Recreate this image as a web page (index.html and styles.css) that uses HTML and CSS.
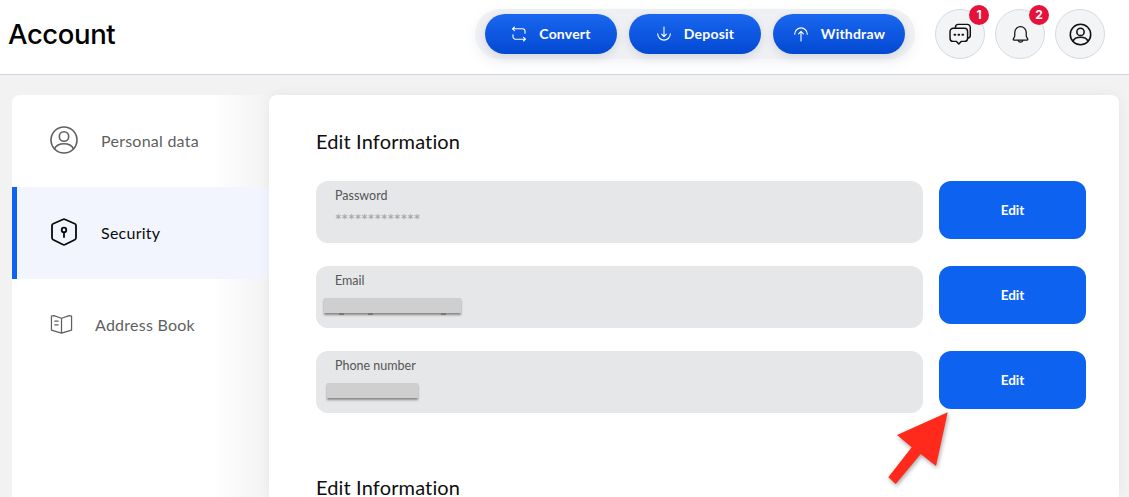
FILE: index.html
```html
<!DOCTYPE html>
<html lang="en">
<head>
<meta charset="utf-8">
<title>Account</title>
<link rel="stylesheet" href="styles.css">
</head>
<body>
<header class="topbar">
  <h1 class="page-title">Account</h1>
  <div class="actions">
    <a class="action">
      <svg class="action-icon" viewBox="0 0 16 16"><path d="M3.500 1 1.500 2.800l2 1.800M1.800 2.800h9.700A2.500 2.500 0 0 1 14 5.300v1.900M12.500 15l2-1.800-2-1.800M14.200 13.200H4.500A2.500 2.500 0 0 1 2 10.700V8.800"/></svg>
      <span>Convert</span>
    </a>
    <a class="action">
      <svg class="action-icon" viewBox="0 0 16 16"><path d="M8 1v9.500M5.600 8.200 8 10.600l2.400-2.400M1.700 7.800a6.300 6.300 0 0 0 12.600 0"/></svg>
      <span>Deposit</span>
    </a>
    <a class="action">
      <svg class="action-icon" viewBox="0 0 16 16"><path d="M8 15V5.500M5.600 7.800 8 5.400l2.400 2.400M1.700 8.200a6.300 6.300 0 0 1 12.600 0"/></svg>
      <span>Withdraw</span>
    </a>
  </div>
  <div class="round-buttons">
    <button class="round">
      <svg class="round-icon chat-icon" viewBox="0 0 24 24"><path d="M7.500 6.200V5.500A2.500 2.500 0 0 1 10 3h8a2.700 2.700 0 0 1 2.700 2.700v7a2.600 2.600 0 0 1-2.200 2.600"/><path d="M5.500 6.500h10a2.800 2.800 0 0 1 2.800 2.800v6a2.800 2.800 0 0 1-2.800 2.800h-2.700L10.500 20.500 8.200 18.100H5.500a2.800 2.800 0 0 1-2.800-2.800v-6A2.800 2.800 0 0 1 5.500 6.500Z"/><path class="dots" d="M6.700 12.300h.6M10.200 12.300h.6M13.700 12.300h.6"/></svg>
      <span class="badge">1</span>
    </button>
    <button class="round">
      <svg class="round-icon bell-icon" viewBox="0 0 24 24"><path d="M12 4.500a5.500 5.500 0 0 0-5.500 5.500v3.200c0 1.400-1.500 2.300-1.500 3.300 0 .7.500 1 1.200 1h11.600c.7 0 1.200-.3 1.200-1 0-1-1.500-1.900-1.500-3.300V10A5.500 5.500 0 0 0 12 4.500Z"/><path d="M9.800 17.800a2.300 2.300 0 0 0 4.400 0"/></svg>
      <span class="badge">2</span>
    </button>
    <button class="round">
      <svg class="round-icon profile-icon" viewBox="0 0 24 24"><circle cx="12" cy="12" r="9.800"/><circle cx="12" cy="9.500" r="3.500"/><path d="M4.800 18.400c1-2.400 3.600-3.700 7.200-3.700s6.200 1.300 7.200 3.700"/></svg>
    </button>
  </div>
</header>

<main class="content">
  <nav class="sidebar">
    <a class="nav-item">
      <svg class="nav-icon" viewBox="0 0 28 28"><circle cx="14" cy="14" r="13"/><circle cx="14" cy="10.500" r="4.700"/><path d="M4.500 22.800c1.600-3.300 5-5 9.500-5s7.900 1.700 9.500 5"/></svg>
      <span>Personal data</span>
    </a>
    <a class="nav-item nav-item-active">
      <svg class="nav-icon" viewBox="0 0 28 28"><path d="M12.800 1.500a2.500 2.500 0 0 1 2.400 0l9.600 4.200a2 2 0 0 1 1.200 1.800v12.300a2.200 2.200 0 0 1-1.200 1.900l-9.600 4.800a2.500 2.500 0 0 1-2.400 0l-9.600-4.800A2.200 2.200 0 0 1 2 19.800V7.500a2 2 0 0 1 1.200-1.800Z"/><circle class="key-dot" cx="14" cy="12" r="2.300"/><path d="M14 14.500v4.500"/></svg>
      <span>Security</span>
    </a>
    <a class="nav-item nav-item-book">
      <svg class="nav-icon book-icon" viewBox="0 0 24 22"><path d="M12 5 4 2.200 1.500 2.800v14.500L12 20.500l10.500-3.200V2.800L20 2.200 12 5Zm0 0v15.500"/><path d="M5 8h3.500M5 12h3.500"/></svg>
      <span>Address Book</span>
    </a>
  </nav>

  <section class="panel">
    <h2 class="section-title">Edit Information</h2>
    <div class="rows">
      <div class="row">
        <div class="field">
          <span class="field-label">Password</span>
          <span class="field-value">*************</span>
        </div>
        <button class="edit">Edit</button>
      </div>
      <div class="row">
        <div class="field">
          <span class="field-label">Email</span>
          <span class="redaction redaction-email"></span>
        </div>
        <button class="edit">Edit</button>
      </div>
      <div class="row">
        <div class="field">
          <span class="field-label">Phone number</span>
          <span class="redaction redaction-phone"></span>
        </div>
        <button class="edit">Edit</button>
      </div>
    </div>
    <h2 class="section-title section-title-second">Edit Information</h2>
  </section>
</main>

<svg class="arrow" viewBox="0 0 1129 497" aria-hidden="true">
  <polygon points="947.700,412.300 897,435 911.700,447.300 888.300,477.300 895.700,484 920.700,454 936,466"/>
</svg>
</body>
</html>
```

FILE: styles.css
```css
* { box-sizing: border-box; }

html, body {
  margin: 0;
  height: 497px;
  overflow: hidden;
}

body {
  position: relative;
  display: flex;
  flex-direction: column;
  background: #f1f1f1;
  font-family: "Lato", "Inter", sans-serif;
  color: #000;
}

.topbar {
  flex: none;
  display: flex;
  align-items: flex-start;
  height: 75px;
  padding: 9px 24px 0 8px;
  background: #fff;
  border-bottom: 1px solid #ccd6e2;
}

.page-title {
  flex: 1;
  margin: 0;
  font-family: "Inter", sans-serif;
  font-size: 27.5px;
  line-height: 50px;
  font-weight: 500;
  letter-spacing: -0.4px;
}

.actions {
  display: flex;
  gap: 12px;
  height: 50px;
  padding: 5px 10px;
  margin-right: 20px;
  background: #eff0f3;
  border-radius: 25px;
  box-shadow: 0 4px 12px rgba(90, 100, 130, 0.08);
}

.action {
  display: flex;
  align-items: center;
  justify-content: center;
  gap: 12px;
  width: 132px;
  height: 40px;
  padding-bottom: 1px;
  color: #fff;
  font-size: 14px;
  font-weight: 700;
  letter-spacing: 0.2px;
  background: linear-gradient(180deg, #1a67f0 0%, #0349d2 100%);
  border-radius: 20px;
  box-shadow: 0 3px 8px rgba(60, 80, 130, 0.16);
}

.action-icon {
  width: 16px;
  height: 16px;
  fill: none;
  stroke: #fff;
  stroke-width: 1.1;
  stroke-linecap: round;
  stroke-linejoin: round;
}

.round-buttons {
  display: flex;
  gap: 10px;
}

.round {
  position: relative;
  display: flex;
  align-items: center;
  justify-content: center;
  width: 50px;
  height: 50px;
  padding: 0;
  background: #f3f4f6;
  border: 1px solid #d5dae3;
  border-radius: 50%;
}

.round-icon {
  width: 24px;
  height: 24px;
  fill: none;
  stroke: #111;
  stroke-width: 1.4;
  stroke-linecap: round;
  stroke-linejoin: round;
}

.round-icon .dots {
  stroke-width: 1.8;
}

.chat-icon {
  width: 27px;
  height: 27px;
  stroke-width: 1.3;
}

.bell-icon {
  width: 25px;
  height: 25px;
  stroke-width: 1.2;
}

.profile-icon {
  width: 25px;
  height: 25px;
  stroke-width: 1.5;
}

.badge {
  position: absolute;
  top: -5px;
  right: -5px;
  width: 20px;
  height: 20px;
  color: #fff;
  font-family: "Inter", sans-serif;
  font-size: 12px;
  font-weight: 700;
  line-height: 20px;
  text-align: center;
  background: #e5133a;
  border-radius: 50%;
}

.content {
  flex: 1;
  display: flex;
  min-height: 0;
  padding: 20px 10px 0 12px;
  background: #f2f2f2;
}

.sidebar {
  flex: none;
  display: flex;
  flex-direction: column;
  width: 257px;
  background: linear-gradient(90deg, #fff 78%, #f3f3f3 100%);
  border-radius: 8px 0 0 0;
}

.nav-item {
  display: flex;
  align-items: center;
  gap: 23px;
  height: 92px;
  padding: 0 0 2px 38px;
  color: #5f5f5f;
  font-size: 16px;
  letter-spacing: 0.25px;
}

.nav-item-active {
  color: #0b0b0b;
  background: #f2f5fd;
  box-shadow: inset 5px 0 0 #0d62f0;
}

.nav-item-book {
  gap: 22px;
}

.nav-icon {
  flex: none;
  width: 28px;
  height: 28px;
  fill: none;
  stroke: currentColor;
  stroke-width: 1.6;
  stroke-linecap: round;
  stroke-linejoin: round;
}

.nav-item-active .nav-icon {
  stroke-width: 1.8;
}

.book-icon {
  width: 23px;
  height: 22px;
  stroke-width: 1.3;
}

.panel {
  flex: 1;
  min-width: 0;
  padding: 34px 33px 0 47px;
  background: #fff;
  border-radius: 8px 8px 0 0;
  box-shadow: 0 0 14px rgba(0, 0, 0, 0.05);
}

.section-title {
  margin: 0 0 28px;
  font-size: 20px;
  line-height: 24px;
  font-weight: 400;
  letter-spacing: 0.14px;
  color: #0e0e0e;
}

.section-title-second {
  margin: 62px 0 0;
}

.rows {
  display: flex;
  flex-direction: column;
  gap: 23px;
}

.row {
  display: flex;
  align-items: flex-start;
  gap: 16px;
}

.field {
  position: relative;
  display: flex;
  flex-direction: column;
  width: 607px;
  height: 62px;
  padding: 7px 19px;
  background: #e6e7e9;
  border-radius: 12px;
}

.field-label {
  font-size: 12.5px;
  line-height: 15px;
  color: #555;
}

.field-value {
  margin-top: 8px;
  font-family: "Inter", sans-serif;
  font-size: 13px;
  line-height: 16px;
  letter-spacing: 0.05px;
  color: #a5a5a5;
}

.redaction {
  position: absolute;
  height: 15px;
  background: #cfcfcf;
  box-shadow: 0 2px 2px rgba(60, 60, 60, 0.55);
}

.redaction-email {
  top: 32px;
  left: 8px;
  width: 137px;
}

.redaction-email::after {
  content: "";
  position: absolute;
  top: 15px;
  left: 0;
  width: 100%;
  height: 2px;
  background:
    linear-gradient(#777, #777) 15px 0 / 5px 2px no-repeat,
    linear-gradient(#777, #777) 44px 0 / 5px 2px no-repeat,
    linear-gradient(#777, #777) 117px 0 / 5px 2px no-repeat;
}

.redaction-phone {
  top: 32px;
  left: 11px;
  width: 91px;
}

.edit {
  flex: none;
  width: 147px;
  height: 58px;
  padding: 0;
  color: #fff;
  font-family: inherit;
  font-size: 13.5px;
  font-weight: 700;
  background: #0d62f0;
  border: 0;
  border-radius: 12px;
}

.arrow {
  position: absolute;
  top: 0;
  left: 0;
  width: 1129px;
  height: 497px;
  pointer-events: none;
  filter: drop-shadow(1px 2px 2px rgba(0, 0, 0, 0.35));
}

.arrow polygon {
  fill: #ff2a1c;
}
```
